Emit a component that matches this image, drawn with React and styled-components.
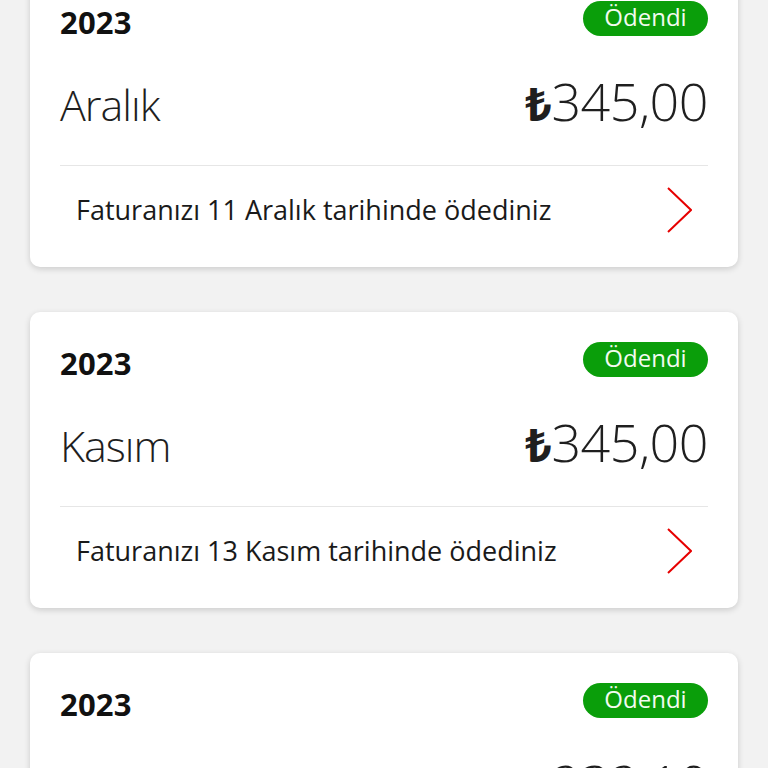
import styled, { createGlobalStyle } from 'styled-components'

const GlobalStyle = createGlobalStyle`
  html, body {
    margin: 0;
    padding: 0;
    background: #f2f2f2;
  }
  body {
    font-family: "Open Sans", "Noto Sans", "Liberation Sans", sans-serif;
    color: #1a1a1a;
  }
`;

const Page = styled.div`
  width: 768px;
  height: 768px;
  overflow: hidden;
  background: #f2f2f2;
`;

const List = styled.div`
  display: flex;
  flex-direction: column;
  gap: 45px;
  padding: 0 30px;
  margin-top: -29px;
`;

const Card = styled.div`
  background: #fff;
  border-radius: 10px;
  box-shadow: 0 2px 6px rgba(0, 0, 0, 0.16);
  padding: 30px 30px 14px;
`;

const Header = styled.div`
  display: flex;
  justify-content: space-between;
  align-items: center;
  height: 35px;
`;

const Year = styled.div`
  font-size: 31px;
  font-weight: 700;
  color: #111;
  letter-spacing: 0.2px;
  padding-top: 6px;
`;

const Badge = styled.div`
  height: 35px;
  width: 125px;
  box-sizing: border-box;
  border-radius: 18px;
  background: #0a9e0a;
  color: #f2fbf0;
  font-size: 24px;
  display: flex;
  align-items: center;
  justify-content: center;
  line-height: 1;
  padding-bottom: 3px;
`;

const MonthRow = styled.div`
  display: flex;
  justify-content: space-between;
  align-items: baseline;
  height: 130px;
  box-sizing: border-box;
  padding-top: 29px;
  border-bottom: 1px solid #e6e6e6;
`;

const Month = styled.div`
  font-size: 43px;
  font-weight: 300;
  letter-spacing: -1px;
  color: #1f1f1f;
`;

const Amount = styled.div`
  font-size: 52px;
  font-weight: 300;
  color: #1f1f1f;
  letter-spacing: -0.5px;
`;

const Lira = styled.span`
  font-weight: 700;
  font-size: 46px;
`;

const Footer = styled.div`
  display: flex;
  align-items: center;
  justify-content: space-between;
  height: 87px;
  padding: 0 16px;
`;

const Note = styled.div`
  font-size: 27px;
  color: #1a1a1a;
`;

const Chevron = () => (
  <svg width="28" height="46" viewBox="0 0 28 46" fill="none">
    <path d="M4 1 L27 23 L4 45" stroke="#e60000" strokeWidth="2" />
  </svg>
);

const BILLS = [
  { year: 2023, month: 'Aralık', amount: '345,00', day: 11 },
  { year: 2023, month: 'Kasım', amount: '345,00', day: 13 },
  { year: 2023, month: 'Ekim', amount: '232,10', day: 12 },
];

function BillCard({ bill }) {
  return (
    <Card>
      <Header>
        <Year>{bill.year}</Year>
        <Badge>Ödendi</Badge>
      </Header>
      <MonthRow>
        <Month>{bill.month}</Month>
        <Amount><Lira>₺</Lira>{bill.amount}</Amount>
      </MonthRow>
      <Footer>
        <Note>Faturanızı {bill.day} {bill.month} tarihinde ödediniz</Note>
        <Chevron />
      </Footer>
    </Card>
  );
}

export default function App() {
  return (
    <Page>
      <GlobalStyle />
      <List>
        {BILLS.map(b => <BillCard key={b.month} bill={b} />)}
      </List>
    </Page>
  );
}
